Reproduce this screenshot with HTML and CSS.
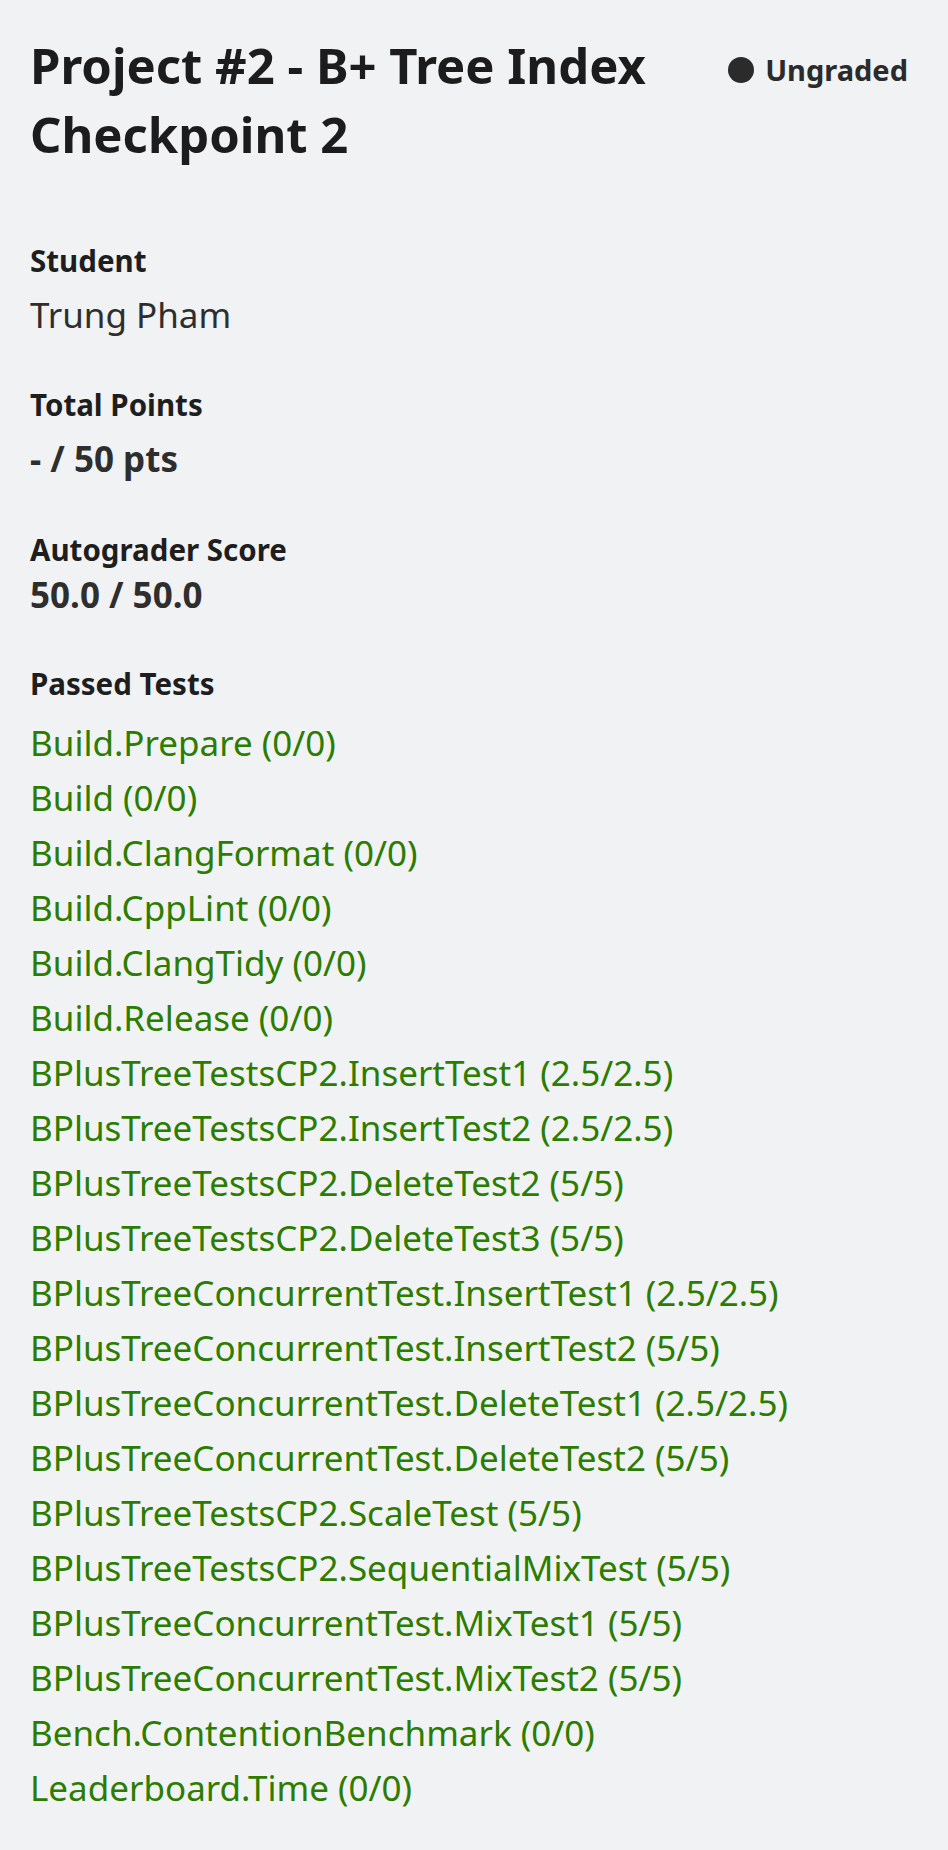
FILE: index.html
```html
<!DOCTYPE html>
<html lang="en">
<head>
<meta charset="utf-8">
<title>Project #2 - B+ Tree Index Checkpoint 2</title>
<link rel="stylesheet" href="styles.css">
</head>
<body>
<main class="page">
  <header class="header">
    <h1 class="title">Project #2 - B+ Tree Index Checkpoint 2</h1>
    <div class="status"><span class="status-dot"></span><span class="status-text">Ungraded</span></div>
  </header>

  <section class="field field-student">
    <div class="label">Student</div>
    <div class="value value-regular">Trung Pham</div>
  </section>

  <section class="field field-points">
    <div class="label">Total Points</div>
    <div class="value value-bold">- / 50 pts</div>
  </section>

  <section class="field field-auto">
    <div class="label">Autograder Score</div>
    <div class="value value-bold value-tight">50.0 / 50.0</div>
  </section>

  <section class="field field-tests">
    <div class="label">Passed Tests</div>
    <ul class="tests">
      <li>Build.Prepare (0/0)</li>
      <li>Build (0/0)</li>
      <li>Build.ClangFormat (0/0)</li>
      <li>Build.CppLint (0/0)</li>
      <li>Build.ClangTidy (0/0)</li>
      <li>Build.Release (0/0)</li>
      <li>BPlusTreeTestsCP2.InsertTest1 (2.5/2.5)</li>
      <li>BPlusTreeTestsCP2.InsertTest2 (2.5/2.5)</li>
      <li>BPlusTreeTestsCP2.DeleteTest2 (5/5)</li>
      <li>BPlusTreeTestsCP2.DeleteTest3 (5/5)</li>
      <li>BPlusTreeConcurrentTest.InsertTest1 (2.5/2.5)</li>
      <li>BPlusTreeConcurrentTest.InsertTest2 (5/5)</li>
      <li>BPlusTreeConcurrentTest.DeleteTest1 (2.5/2.5)</li>
      <li>BPlusTreeConcurrentTest.DeleteTest2 (5/5)</li>
      <li>BPlusTreeTestsCP2.ScaleTest (5/5)</li>
      <li>BPlusTreeTestsCP2.SequentialMixTest (5/5)</li>
      <li>BPlusTreeConcurrentTest.MixTest1 (5/5)</li>
      <li>BPlusTreeConcurrentTest.MixTest2 (5/5)</li>
      <li>Bench.ContentionBenchmark (0/0)</li>
      <li>Leaderboard.Time (0/0)</li>
    </ul>
  </section>
</main>
</body>
</html>
```

FILE: styles.css
```css
html, body {
  margin: 0;
  padding: 0;
  background: #f1f2f4;
}

body {
  font-family: "Noto Sans", "Open Sans", sans-serif;
  color: #1d1d1d;
}

.page {
  padding: 31px 40px 40px 30px;
  display: flex;
  flex-direction: column;
}

.header {
  display: flex;
  align-items: flex-start;
  gap: 60px;
}

.title {
  flex: 1;
  margin: 0;
  font-size: 49px;
  line-height: 69px;
  font-weight: 700;
  color: #1c1c1c;
}

.status {
  flex-shrink: 0;
  display: inline-flex;
  align-items: center;
  margin-top: 19px;
  font-size: 29px;
  line-height: 40px;
  font-weight: 700;
  color: #2b2b2b;
}

.status-dot {
  width: 26px;
  height: 26px;
  border-radius: 50%;
  background: #2b2b2b;
  margin-right: 11px;
}

.field {
  display: flex;
  flex-direction: column;
}

.field-student { margin-top: 72px; }
.field-points { margin-top: 46px; }
.field-auto { margin-top: 47px; }
.field-tests { margin-top: 45px; }

.label {
  font-size: 29.5px;
  line-height: 40px;
  font-weight: 700;
  color: #1e1e1e;
}

.value {
  margin-top: 10px;
  font-size: 35px;
  line-height: 48px;
  color: #2e2e2e;
}

.value-regular { font-weight: 400; }
.value-bold { font-weight: 700; }
.value-tight { margin-top: 1px; }

.tests {
  list-style: none;
  margin: 11px 0 0;
  padding: 0;
}

.tests li {
  font-size: 35px;
  line-height: 55px;
  color: #2c7c00;
}
```
